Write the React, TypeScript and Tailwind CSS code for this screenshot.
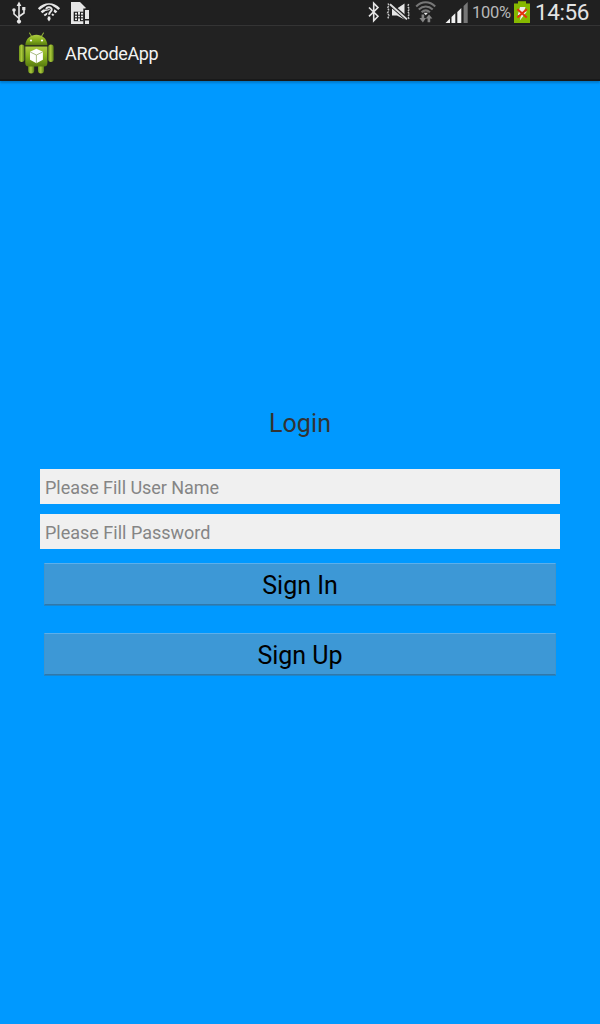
import React from "react";

function LeftIcons() {
  return (
    <svg width="100" height="25" viewBox="0 0 100 25" className="shrink-0" fill="none">
      <g stroke="#e6e6e6" strokeWidth="1.6">
        <path d="M19 4V22" />
        <path d="M14 11V14L19 18.5M24 9V13L19 16.5" />
      </g>
      <g fill="#e6e6e6">
        <path d="M19 1.6L21.4 6H16.6Z" />
        <circle cx="14" cy="10" r="1.8" />
        <rect x="22.2" y="7" width="3.2" height="3.2" />
        <circle cx="19" cy="21.6" r="2.1" />
      </g>
      <g stroke="#e6e6e6">
        <path d="M38.8 9.2C44.8 3 53.2 3 59.2 9.2" strokeWidth="2.6" />
        <path d="M41.5 12.4C46 7.8 52 7.8 56.5 12.4" strokeWidth="2.4" />
        <path d="M44.3 15.4C47.4 12.6 50.8 12.6 53.7 15.4" strokeWidth="2" />
      </g>
      <path d="M46 9.4C46 6 52.2 6 52 9.6C51.8 12 49.2 12 49.1 15.4" stroke="#202020" strokeWidth="4.4" />
      <path d="M46.3 9.3C46.5 6.5 51.9 6.7 51.7 9.6C51.5 11.7 49.1 11.8 49.1 14.8" stroke="#e6e6e6" strokeWidth="2" />
      <path d="M47.8 16.5H50.3V18.5H51L49 21.5L47 18.5H47.8Z" fill="#e6e6e6" />
      <path d="M71 2H80L85.5 7.5V24H71Z" fill="#e6e6e6" />
      <g fill="#202020">
        <rect x="73.7" y="11.7" width="10" height="9.5" />
        <rect x="83.3" y="8.5" width="7" height="16.5" />
      </g>
      <g fill="#e6e6e6">
        <rect x="75" y="12.8" width="2" height="1.8" />
        <rect x="78" y="11.7" width="2" height="3" />
        <rect x="81" y="12.8" width="2" height="1.8" />
        <rect x="75" y="15.7" width="2" height="1.6" />
        <rect x="78" y="15.7" width="2" height="1.6" />
        <rect x="81" y="15.7" width="2" height="1.6" />
        <rect x="75" y="18.4" width="2" height="1.7" />
        <rect x="78" y="18.4" width="2" height="2.8" />
        <rect x="81" y="18.4" width="2" height="1.7" />
        <rect x="85" y="10" width="4" height="9" />
        <rect x="85" y="20.5" width="4" height="3.5" />
      </g>
    </svg>
  );
}

function RightIcons() {
  return (
    <svg width="112" height="25" viewBox="360 0 112 25" className="shrink-0" fill="none">
      <path d="M369 7.5L378 16.2L373.7 20.8V3.2L378 7.6L369 16.4" stroke="#e6e6e6" strokeWidth="1.6" />
      <path d="M392 8.5H397L404.5 3.5V19.5L397 15.5H392Z" fill="#e6e6e6" />
      <path d="M389.5 3.5L407.5 19.5" stroke="#202020" strokeWidth="4.2" />
      <path d="M390 4.2L407 19.4" stroke="#dddddd" strokeWidth="1.9" />
      <g stroke="#c8c8c8" strokeWidth="1.4" strokeDasharray="2 1">
        <path d="M388 3.5L389 5.5L387.5 8L389 10.5L387.5 13L389 15.5L387.8 18.5" />
        <path d="M408.6 4L407.8 6.5L409.4 9L407.8 11.5L409.4 14L408 16.5L409 19" />
      </g>
      <g stroke="#777777" strokeWidth="2.1">
        <path d="M416.2 6.4C421.8 .9 429.5 .9 435.2 6.4" />
        <path d="M418.8 9.4C423 5.5 428.5 5.5 432.7 9.4" />
        <path d="M421.6 12.3C424.2 9.9 427.3 9.9 429.9 12.3" />
      </g>
      <path d="M423.6 12.8H428L425.8 15.3Z" fill="#e6e6e6" />
      <path d="M421.6 14.5H424.2V18H426L422.9 22.4L419.4 18H421.6Z" fill="#858585" />
      <path d="M427.6 22.3V18.5H425.8L429 14.4L432.4 18.5H430.2V22.3Z" fill="#858585" />
      <g fill="#f0f0f0">
        <path d="M445.5 23L450 18.5V23Z" />
        <path d="M451.5 17L455.3 13.2V23H451.5Z" />
        <path d="M457.3 12L461.3 8V23H457.3Z" />
      </g>
      <path d="M463.6 6L467.7 2V23H463.6Z" fill="#777777" />
    </svg>
  );
}

function Battery() {
  return (
    <svg width="16" height="25" viewBox="514 0 16 25" className="shrink-0">
      <path d="M518 1.2H526V3.5H530V23H514V3.5H518Z" fill="#86b900" />
      <path d="M520 7H525.5L524 11.5H527L519.8 20.5L521 15H517.8Z" fill="#eeeeee" />
      <path d="M517.4 9.2L526.8 17.4M526.8 9.2L517.4 17.4" stroke="#e5310e" strokeWidth="2" />
    </svg>
  );
}

function Robot() {
  return (
    <svg width="36" height="42" viewBox="18 32 36 42" className="ml-[18px] mt-[6px] shrink-0">
      <defs>
        <linearGradient id="green" x1="0" y1="0" x2="0" y2="1">
          <stop stopColor="#afcb43" />
          <stop offset=".5" stopColor="#86b01d" />
          <stop offset="1" stopColor="#587b10" />
        </linearGradient>
        <linearGradient id="limb" x1="0" y1="0" x2="1" y2="0">
          <stop stopColor="#70951a" />
          <stop offset=".45" stopColor="#aac83a" />
          <stop offset="1" stopColor="#577a15" />
        </linearGradient>
      </defs>
      <path d="M29.5 33L32 37M43.5 33L41 37" stroke="#8eae36" strokeWidth="1.1" strokeLinecap="round" />
      <rect x="28.2" y="61" width="6" height="12.5" rx="3" fill="url(#limb)" />
      <rect x="38" y="61" width="6" height="12.5" rx="3" fill="url(#limb)" />
      <rect x="19" y="44.5" width="5.5" height="17.5" rx="2.7" fill="url(#limb)" />
      <rect x="48.2" y="44.5" width="5.5" height="17.5" rx="2.7" fill="url(#limb)" />
      <path d="M25.3 45.2C26 31.2 46.8 31.2 47.4 45.2Z" fill="url(#green)" />
      <path d="M25.3 46.4H47.4V63Q47.4 66.5 44 66.5H28.8Q25.3 66.5 25.3 63Z" fill="url(#green)" />
      <circle cx="31" cy="40.5" r="1.1" fill="white" />
      <circle cx="42" cy="40.5" r="1.1" fill="white" />
      <path d="M36.4 48.8L42.9 51.8V59.7L36.4 63.3L30 59.7V51.8Z" fill="white" />
      <path d="M30.2 52L36.4 55L42.7 52M36.4 55V63" fill="none" stroke="#94ab65" strokeWidth=".8" />
    </svg>
  );
}

function ActionButton({ children }: { children: React.ReactNode }) {
  return (
    <button className="mx-1 block h-[42px] border border-x-[#4294ca] border-t-[#5cafeb] border-b-[#3278a9] bg-[#3d98d6] pt-[2px] text-[25px] leading-[40px] text-black shadow-[0_1px_0_#1c86cb]">
      {children}
    </button>
  );
}

export default function App() {
  return (
    <div className="flex h-[1024px] w-[600px] flex-col overflow-hidden bg-[#0099ff] font-['Roboto',sans-serif]">
      <header className="flex h-[25px] shrink-0 items-start bg-[#202020] text-[#e4e4e4]">
        <LeftIcons />
        <div className="flex-1" />
        <RightIcons />
        <span className="w-[42px] whitespace-nowrap text-[16.5px] leading-[25px] tracking-[-0.25px] text-[#b8b8b8]">100%</span>
        <Battery />
        <span className="w-[70px] pl-[5px] text-[22.5px] leading-[25px] tracking-[-0.4px]">14:56</span>
      </header>
      <div className="flex h-[56px] shrink-0 items-start border-t border-b-2 border-t-[#343434] border-b-[#191919] bg-[#222222] shadow-[0_2px_2px_#007acc]">
        <Robot />
        <span className="ml-[11px] text-[18px] leading-[55px] tracking-[-0.35px] text-[#f3f3f3]">ARCodeApp</span>
      </div>
      <main className="flex flex-col px-10 pt-[323px]">
        <h1 className="h-[65px] text-center text-[25px] leading-[40px] tracking-[0.1px] text-[#333333]">Login</h1>
        <input aria-label="User name" placeholder="Please Fill User Name" className="mb-[10px] h-[35px] bg-[#f0f0f0] px-[5px] pt-px text-[18px] tracking-[-0.04px] outline-none placeholder:text-[#858585]" />
        <input aria-label="Password" type="password" placeholder="Please Fill Password" className="mb-[14px] h-[35px] bg-[#f0f0f0] px-[5px] pt-px text-[18px] outline-none placeholder:text-[#858585]" />
        <ActionButton>Sign In</ActionButton>
        <div className="h-[28px]" />
        <ActionButton>Sign Up</ActionButton>
      </main>
    </div>
  );
}
